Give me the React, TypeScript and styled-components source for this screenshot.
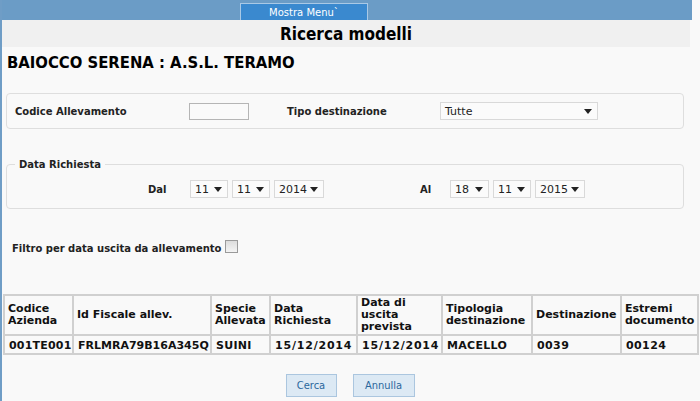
import React from 'react';
import styled, { createGlobalStyle } from 'styled-components';

const GlobalStyle = createGlobalStyle`
  html, body {
    margin: 0;
    padding: 0;
    background: #f9f9f9;
  }
  body {
    font-family: "DejaVu Sans", Verdana, sans-serif;
    color: #111;
  }
`;

const Page = styled.div`
  width: 700px;
  height: 401px;
  overflow: hidden;
  border-left: 2px solid #6f9dc6;
  box-sizing: border-box;
  background: #f9f9f9;
`;

const TopBar = styled.div`
  height: 20px;
  margin-right: 8px;
  background: #6b9cc6;
  display: flex;
  align-items: flex-end;
  padding-left: 238px;
`;

const MenuTab = styled.div`
  width: 126px;
  height: 16px;
  background: #3a89cf;
  border: 1px solid #a9c9e6;
  border-bottom: none;
  color: #fff;
  font-size: 10px;
  display: flex;
  align-items: center;
  justify-content: center;
`;

const TitleBand = styled.div`
  height: 27px;
  margin-right: 10px;
  background: #f0f0f0;
  display: flex;
  align-items: center;
  justify-content: center;
`;

const Title = styled.h1`
  margin: 0;
  font-family: "DejaVu Sans Condensed", "Liberation Sans Narrow", sans-serif;
  font-size: 17px;
  font-weight: bold;
  color: #000;
`;

const Operator = styled.h2`
  margin: 7px 0 0 5px;
  font-family: "DejaVu Sans Condensed", "Liberation Sans Narrow", sans-serif;
  font-size: 16.5px;
  font-weight: bold;
  color: #000;
  line-height: 18px;
`;

const Fieldset = styled.fieldset<{ $top: number; $height: number }>`
  margin: ${(p) => p.$top}px 16px 0 4px;
  height: ${(p) => p.$height}px;
  box-sizing: border-box;
  padding: 0 8px;
  border: 1px solid #dedede;
  border-radius: 4px;
  display: flex;
  align-items: center;
`;

const Legend = styled.legend`
  margin-left: 0;
  padding: 0 4px;
  font-size: 10px;
  font-weight: bold;
  color: #222;
`;

const Label = styled.span<{ $width: number }>`
  width: ${(p) => p.$width}px;
  flex: none;
  font-size: 10px;
  font-weight: bold;
  color: #222;
`;

const TextInput = styled.div`
  width: 58px;
  height: 15px;
  border: 1px solid #b5b5b5;
  background: #fafafa;
  margin-right: 38px;
`;

const Select = styled.div<{ $width: number }>`
  width: ${(p) => p.$width}px;
  height: 18px;
  box-sizing: border-box;
  border: 1px solid #d9d9d9;
  background: #fbfbfb;
  display: flex;
  align-items: center;
  justify-content: space-between;
  padding: 0 5px 0 4px;
  font-size: 11px;
  color: #222;
  margin-right: 4px;
  flex: none;
`;

const Arrow = styled.span`
  width: 0;
  height: 0;
  border-left: 4px solid transparent;
  border-right: 4px solid transparent;
  border-top: 5px solid #222;
`;

const Spacer = styled.span<{ $width: number }>`
  width: ${(p) => p.$width}px;
  flex: none;
`;

const FilterRow = styled.div`
  margin: 34px 0 0 10px;
  display: flex;
  align-items: center;
  gap: 4px;
  font-size: 10px;
  font-weight: bold;
  color: #222;
`;

const CheckBox = styled.span`
  width: 11px;
  height: 11px;
  border: 1px solid #9a9a9a;
  background: linear-gradient(#dcdcdc, #f4f4f4);
  margin-top: -4px;
`;

const Table = styled.table`
  margin: 40px 0 0 1px;
  width: 696px;
  border-collapse: separate;
  border-spacing: 0;
  border: 1px solid #d0d0d0;
  font-size: 11px;
  font-weight: bold;
  color: #111;
  table-layout: fixed;
`;

const Th = styled.th`
  border: 1px solid #d0d0d0;
  text-align: left;
  vertical-align: middle;
  padding: 0 1px 0 3px;
  height: 38px;
  line-height: 12px;
  font-weight: bold;
`;

const Td = styled.td<{ $spacing: number }>`
  border: 1px solid #d0d0d0;
  padding: 2px 0 0 4px;
  height: 15px;
  line-height: 14px;
  white-space: nowrap;
  overflow: hidden;
  letter-spacing: ${(p) => p.$spacing}px;
`;

const Buttons = styled.div`
  display: flex;
  justify-content: center;
  gap: 16px;
  margin: 19px 0 0 -2px;
`;

const Button = styled.button<{ $width: number }>`
  width: ${(p) => p.$width}px;
  height: 23px;
  background: #dce9f4;
  border: 1px solid #abc6df;
  color: #2a679c;
  font-family: "DejaVu Sans Condensed", "Liberation Sans Narrow", sans-serif;
  font-size: 11px;
  padding: 0;
`;

const columns = [
  { title: 'Codice Azienda', width: 69 },
  { title: 'Id Fiscale allev.', width: 138 },
  { title: 'Specie Allevata', width: 59 },
  { title: 'Data Richiesta', width: 87 },
  { title: 'Data di uscita prevista', width: 85 },
  { title: 'Tipologia destinazione', width: 90 },
  { title: 'Destinazione', width: 89 },
  { title: 'Estremi documento', width: 77 },
];

const row = [
  { v: '001TE001', s: 0.2 },
  { v: 'FRLMRA79B16A345Q', s: 0 },
  { v: 'SUINI', s: 0.3 },
  { v: '15/12/2014', s: 0.8 },
  { v: '15/12/2014', s: 0.8 },
  { v: 'MACELLO', s: 0.3 },
  { v: '0039', s: 0.4 },
  { v: '00124', s: 0.4 },
];

const Dropdown: React.FC<{ value: string; width: number }> = ({ value, width }) => (
  <Select $width={width}>
    <span>{value}</span>
    <Arrow />
  </Select>
);

const App: React.FC = () => {
  return (
    <>
      <GlobalStyle />
      <Page>
        <TopBar>
          <MenuTab>Mostra Menu`</MenuTab>
        </TopBar>
        <TitleBand>
          <Title>Ricerca modelli</Title>
        </TitleBand>
        <Operator>BAIOCCO SERENA : A.S.L. TERAMO</Operator>

        <Fieldset $top={21} $height={36}>
          <Label $width={174}>Codice Allevamento</Label>
          <TextInput />
          <Label $width={153}>Tipo destinazione</Label>
          <Dropdown value="Tutte" width={158} />
        </Fieldset>

        <Fieldset $top={30} $height={50}>
          <Legend>Data Richiesta</Legend>
          <Spacer $width={133} />
          <Label $width={42}>Dal</Label>
          <Dropdown value="11" width={38} />
          <Dropdown value="11" width={38} />
          <Dropdown value="2014" width={50} />
          <Spacer $width={92} />
          <Label $width={30}>Al</Label>
          <Dropdown value="18" width={39} />
          <Dropdown value="11" width={38} />
          <Dropdown value="2015" width={50} />
        </Fieldset>

        <FilterRow>
          <span>Filtro per data uscita da allevamento</span>
          <CheckBox />
        </FilterRow>

        <Table>
          <colgroup>
            {columns.map((c) => (
              <col key={c.title} style={{ width: c.width }} />
            ))}
          </colgroup>
          <thead>
            <tr>
              {columns.map((c) => (
                <Th key={c.title}>{c.title}</Th>
              ))}
            </tr>
          </thead>
          <tbody>
            <tr>
              {row.map((c, i) => (
                <Td key={i} $spacing={c.s}>{c.v}</Td>
              ))}
            </tr>
          </tbody>
        </Table>

        <Buttons>
          <Button $width={51}>Cerca</Button>
          <Button $width={62}>Annulla</Button>
        </Buttons>
      </Page>
    </>
  );
};

export default App;
